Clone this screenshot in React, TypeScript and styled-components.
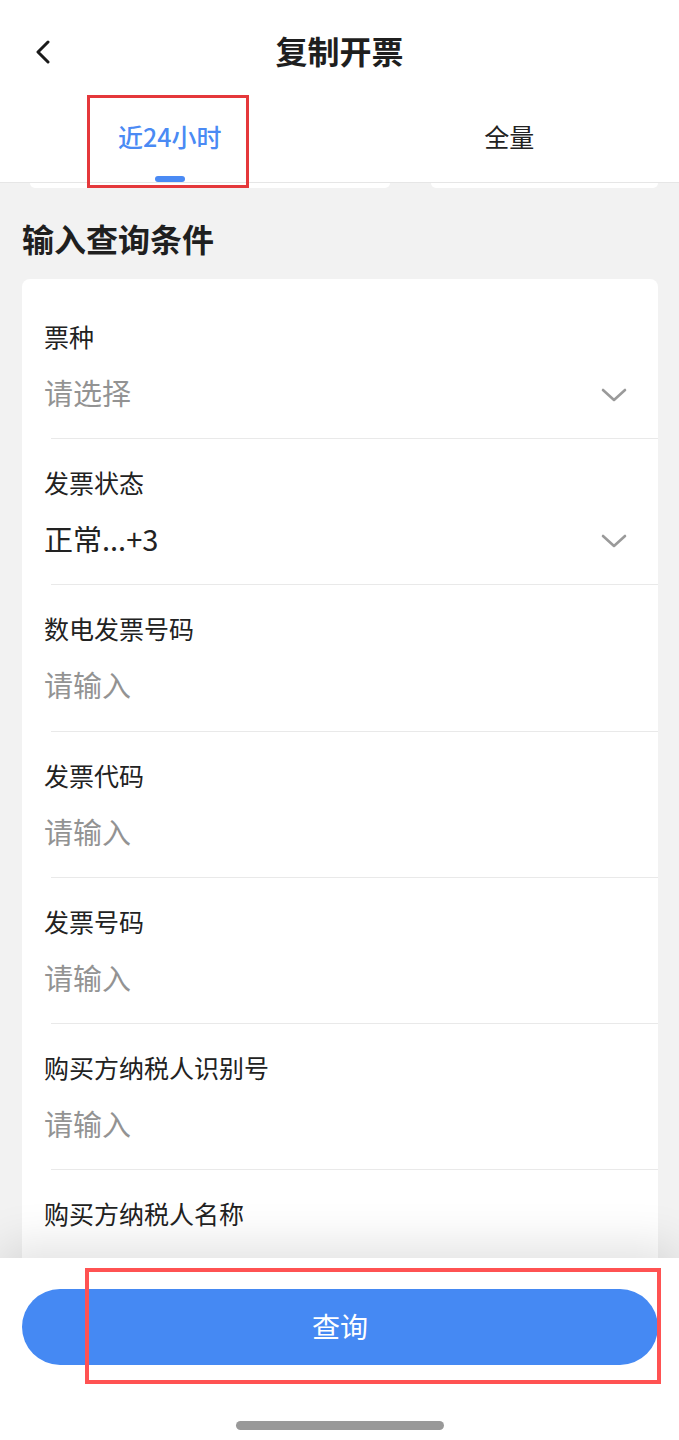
import React from 'react';
import styled, { createGlobalStyle } from 'styled-components';

const GlobalStyle = createGlobalStyle`
  html, body {
    margin: 0;
    padding: 0;
    background: #ffffff;
  }
  * {
    box-sizing: border-box;
  }
`;

const Page = styled.div`
  position: relative;
  width: 679px;
  height: 1440px;
  display: flex;
  flex-direction: column;
  overflow: hidden;
  background: #f2f2f2;
  font-family: "Noto Sans CJK SC", "Noto Sans", sans-serif;
  color: #222222;
`;

const Header = styled.div`
  height: 95px;
  flex-shrink: 0;
  display: flex;
  align-items: center;
  justify-content: center;
  position: relative;
  background: #ffffff;
  padding-top: 4px;
`;

const BackButton = styled.div`
  position: absolute;
  left: 34px;
  top: 40px;
  width: 18px;
  height: 24px;
  display: flex;
`;

const Title = styled.div`
  font-size: 32px;
  font-weight: 700;
  line-height: 40px;
  color: #1f1f1f;
`;

const TabBar = styled.div`
  height: 88px;
  flex-shrink: 0;
  display: flex;
  background: #ffffff;
  border-bottom: 1px solid #e6e6e6;
`;

const Tab = styled.div<{ $active?: boolean }>`
  flex: 1;
  display: flex;
  flex-direction: column;
  align-items: center;
  justify-content: flex-end;
  font-size: 25px;
  line-height: 34px;
  font-weight: ${(p) => (p.$active ? 500 : 400)};
  color: ${(p) => (p.$active ? '#4a8af4' : '#222222')};
`;

const Indicator = styled.div<{ $active?: boolean }>`
  width: 30px;
  height: 6px;
  border-radius: 3px;
  margin-top: 23px;
  background: ${(p) => (p.$active ? '#4a8af4' : 'transparent')};
`;

const Main = styled.div`
  flex: 1;
  display: flex;
  flex-direction: column;
  padding: 0 21px 0 22px;
  overflow: hidden;
`;

const PeekRow = styled.div`
  display: flex;
  height: 5px;
  flex-shrink: 0;
  gap: 41px;
  padding-left: 8px;
`;

const PeekCard = styled.div<{ $w: number }>`
  width: ${(p) => p.$w}px;
  height: 5px;
  background: #ffffff;
  border-radius: 0 0 12px 12px;
`;

const SectionTitle = styled.div`
  font-size: 32px;
  font-weight: 700;
  line-height: 40px;
  margin-top: 30px;
  color: #1f1f1f;
`;

const Card = styled.div`
  margin-top: 21px;
  background: #ffffff;
  border-radius: 8px;
  padding-top: 14px;
  flex-shrink: 0;
`;

const Field = styled.div<{ $last?: boolean }>`
  padding: 28px 31px 27.2px 22px;
  min-height: 146.2px;
  position: relative;
  &::after {
    content: '';
    display: ${(p) => (p.$last ? 'none' : 'block')};
    position: absolute;
    left: 29px;
    right: 0;
    bottom: 0;
    height: 1px;
    background: #e9e9e9;
  }
`;

const Label = styled.div`
  font-size: 25px;
  line-height: 30px;
  color: #222222;
`;

const ValueRow = styled.div`
  margin-top: 21px;
  height: 40px;
  display: flex;
  align-items: center;
  justify-content: space-between;
`;

const Value = styled.div<{ $placeholder?: boolean }>`
  font-size: 29px;
  line-height: 40px;
  color: ${(p) => (p.$placeholder ? '#939393' : '#222222')};
`;

const Arrow = styled.div`
  display: flex;
  position: relative;
  top: 3px;
`;

const BottomBar = styled.div`
  height: 182px;
  flex-shrink: 0;
  background: #ffffff;
  position: relative;
  z-index: 1;
  box-shadow: 0 -12px 44px rgba(0, 0, 0, 0.12);
  display: flex;
  flex-direction: column;
  align-items: center;
  padding-top: 31px;
`;

const QueryButton = styled.button`
  width: 636px;
  height: 76px;
  margin-left: 1px;
  border: none;
  border-radius: 38px;
  background: #4589f3;
  color: #ffffff;
  font-family: "Noto Sans CJK SC", "Noto Sans", sans-serif;
  font-size: 28px;
  line-height: 40px;
  padding: 0 0 3px;
`;

const HomeIndicator = styled.div`
  width: 208px;
  height: 9px;
  border-radius: 5px;
  background: #999999;
  margin-top: 56px;
`;

const Annotation = styled.div<{ $color: string; $w?: number }>`
  position: absolute;
  border: ${(p) => p.$w ?? 3}px solid ${(p) => p.$color};
  pointer-events: none;
  z-index: 5;
`;

const ChevronDown = () => (
  <svg width="26" height="16" viewBox="0 0 26 16" fill="none">
    <polyline points="2,3 13,13 24,3" stroke="#9a9a9a" strokeWidth="2.6" strokeLinecap="round" strokeLinejoin="round" />
  </svg>
);

const ChevronLeft = () => (
  <svg width="18" height="24" viewBox="0 0 18 24" fill="none">
    <polyline points="14,2 4,12 14,22" stroke="#1a1a1a" strokeWidth="3" strokeLinecap="round" strokeLinejoin="round" />
  </svg>
);

type FieldItem = { label: string; value?: string; placeholder?: boolean; select?: boolean };

// the last field's input row is hidden under the bottom bar
const fields: FieldItem[] = [
  { label: '票种', value: '请选择', placeholder: true, select: true },
  { label: '发票状态', value: '正常...+3', select: true },
  { label: '数电发票号码', value: '请输入', placeholder: true },
  { label: '发票代码', value: '请输入', placeholder: true },
  { label: '发票号码', value: '请输入', placeholder: true },
  { label: '购买方纳税人识别号', value: '请输入', placeholder: true },
  { label: '购买方纳税人名称' },
];

const App = () => {
  return (
    <Page>
      <GlobalStyle />
      <Header>
        <BackButton>
          <ChevronLeft />
        </BackButton>
        <Title>复制开票</Title>
      </Header>
      <TabBar>
        <Tab $active>
          近24小时
          <Indicator $active />
        </Tab>
        <Tab>
          全量
          <Indicator />
        </Tab>
      </TabBar>
      <Main>
        <PeekRow>
          <PeekCard $w={360} />
          <PeekCard $w={227} />
        </PeekRow>
        <SectionTitle>输入查询条件</SectionTitle>
        <Card>
          {fields.map((f, i) => (
            <Field key={f.label} $last={i === fields.length - 1}>
              <Label>{f.label}</Label>
              {f.value && (
                <ValueRow>
                  <Value $placeholder={f.placeholder}>{f.value}</Value>
                  {f.select && (
                    <Arrow>
                      <ChevronDown />
                    </Arrow>
                  )}
                </ValueRow>
              )}
            </Field>
          ))}
        </Card>
      </Main>
      <BottomBar>
        <QueryButton>查询</QueryButton>
        <HomeIndicator />
      </BottomBar>
      <Annotation $color="#e5383b" style={{ left: 87, top: 95, width: 162, height: 93 }} />
      <Annotation $color="#ff5252" $w={4} style={{ left: 85, top: 1268, width: 576, height: 116 }} />
    </Page>
  );
};

export default App;
